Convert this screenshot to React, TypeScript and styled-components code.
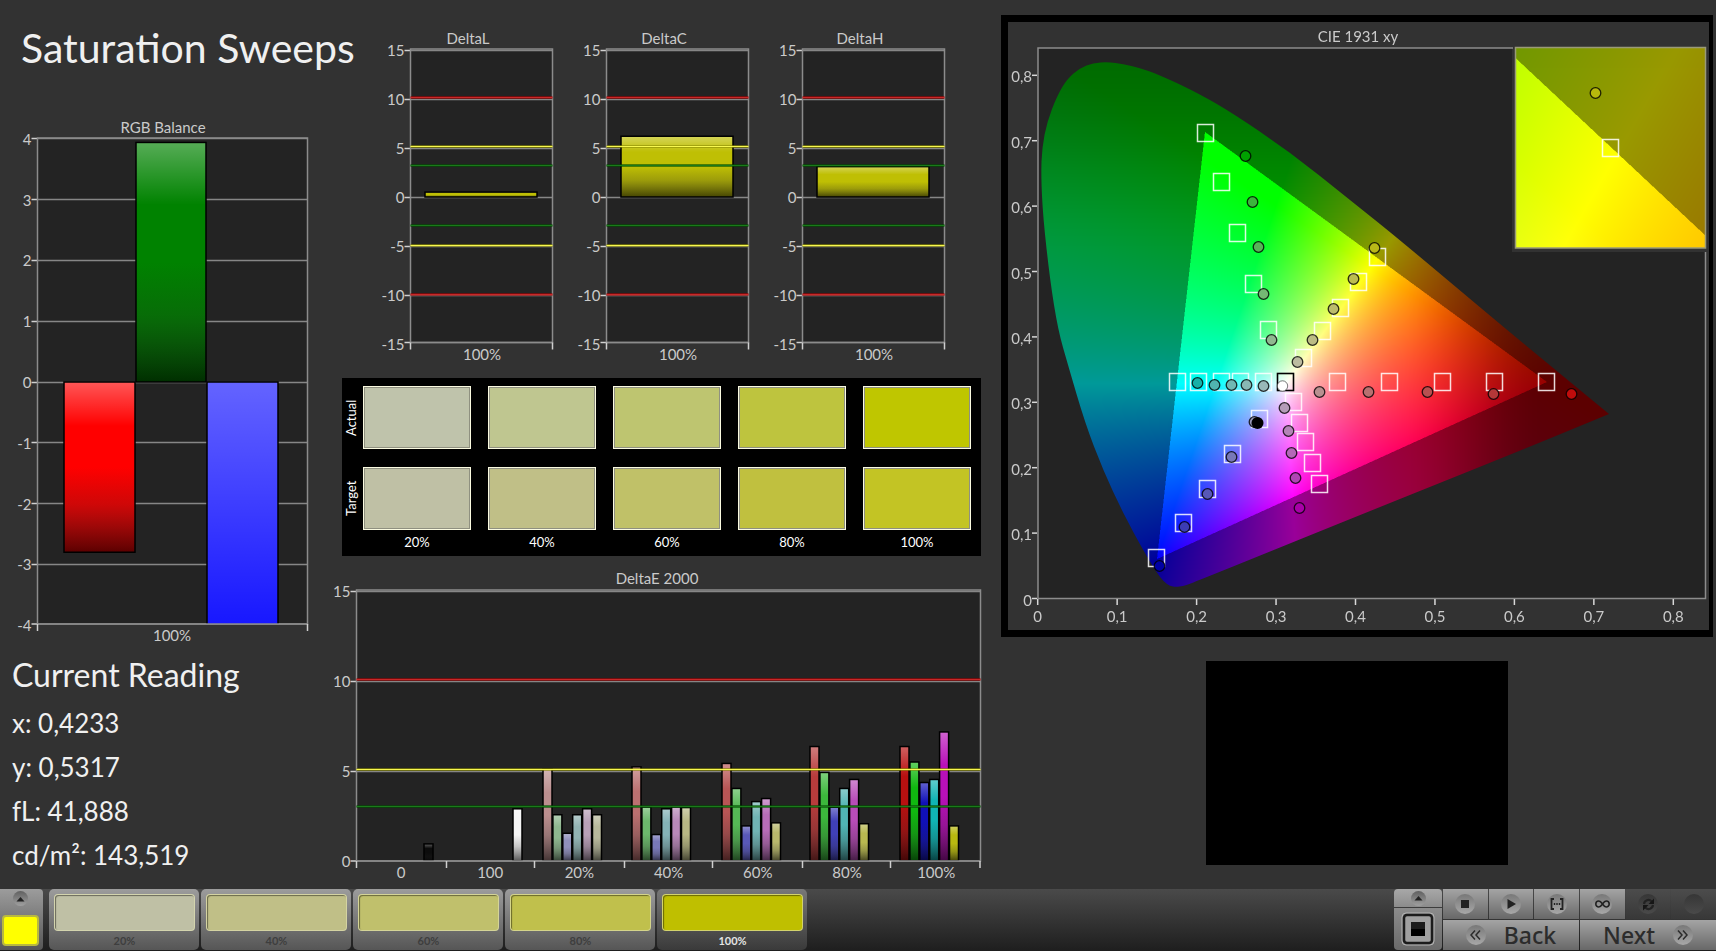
import React, { useEffect, useRef } from "react";
import styled, { createGlobalStyle } from "styled-components";

const GlobalStyle = createGlobalStyle`
  *, *::before, *::after { box-sizing: border-box; }
  body {
    margin: 0;
    background: #323232;
    color: #f0f0f0;
    font-family: Lato, "Open Sans", sans-serif;
  }
  button { font-family: inherit; }
`;

const Page = styled.div`
  display: flex;
  flex-direction: column;
  min-height: 100vh;
`;

const Dashboard = styled.main`
  flex: 1;
  display: grid;
  grid-template-columns: minmax(0, 342fr) minmax(0, 659fr) minmax(0, 715fr);
`;

const LeftColumn = styled.section`
  display: flex;
  flex-direction: column;
  padding-top: 24px;
`;

const MiddleColumn = styled.section`
  display: flex;
  flex-direction: column;
  gap: 10px;
  padding: 26px 20px 0 0;
`;

const RightColumn = styled.section`
  display: flex;
  flex-direction: column;
  gap: 24px;
  padding: 15px 3px 0 0;
`;

const PageTitle = styled.h1`
  margin: 0 0 46px 21px;
  font-size: 41px;
  line-height: 48px;
  font-weight: 400;
  white-space: nowrap;
`;

const Readings = styled.div`
  padding: 8px 0 0 12px;
`;

const ReadingsTitle = styled.h2`
  margin: 0 0 7px;
  font-size: 32px;
  line-height: 38px;
  font-weight: 400;
`;

const Reading = styled.p`
  margin: 0;
  font-size: 26px;
  line-height: 44px;
`;

const ChartSvg = styled.svg`
  display: block;
  width: 100%;
  height: auto;
  overflow: visible;
  font-size: 15px;
`;

const DeltaRow = styled.div`
  display: grid;
  grid-template-columns: repeat(3, minmax(0, 1fr));
  padding: 0 23px 0 28px;
`;

/* ---------- bar charts ---------- */

type Bar = { x: number; w: number; value: number; color: string };
type Threshold = { value: number; color: string; glow: string };
type BarChartProps = {
  id: string;
  title: string;
  titleX: number;
  titleY: number;
  width: number;
  height: number;
  left: number;
  right: number;
  top: number;
  bottom: number;
  zeroY: number;
  unit: number;
  yTicks: number[];
  xTicks: number[];
  xLabels: { x: number; text: string }[];
  bars: Bar[];
  thresholds?: Threshold[];
};

function BarChart(p: BarChartProps) {
  const y = (v: number) => p.zeroY - v * p.unit;
  const lineY = (v: number) => Math.floor(y(v)) + 0.5;
  return (
    <ChartSvg viewBox={`0 0 ${p.width} ${p.height}`} role="img" aria-label={p.title}>
      <defs>
        <linearGradient id={`${p.id}-shade`} x1="0" y1="0" x2="0" y2="1">
          <stop offset="0" stopColor="#fff" stopOpacity="0.34" />
          <stop offset="0.26" stopColor="#fff" stopOpacity="0" />
          <stop offset="0.5" stopColor="#222" stopOpacity="0" />
          <stop offset="0.72" stopColor="#222" stopOpacity="0.22" />
          <stop offset="1" stopColor="#000" stopOpacity="0.64" />
        </linearGradient>
        <clipPath id={`${p.id}-clip`}>
          <rect x={p.left} y={p.top} width={p.right - p.left} height={p.bottom - p.top} />
        </clipPath>
      </defs>
      <text x={p.titleX} y={p.titleY} textAnchor="middle" fill="#cacaca">{p.title}</text>
      <rect x={p.left} y={p.top} width={p.right - p.left} height={p.bottom - p.top} fill="#232323" />
      {p.yTicks.map((t) => {
        const ty = Math.min(lineY(t), p.bottom);
        return (
          <g key={t}>
            <line x1={p.left - 6} x2={p.left} y1={ty} y2={ty} stroke="#d0d0d0" strokeWidth="1.5" />
            <line x1={p.left} x2={p.right} y1={ty} y2={ty} stroke="#868686" strokeWidth="1.5" />
            <text x={p.left - 6} y={y(t) + 6} textAnchor="end" fill="#cacaca">{t}</text>
          </g>
        );
      })}
      <g clipPath={`url(#${p.id}-clip)`}>
        {p.bars.map((b, i) => {
          const by = Math.min(y(b.value), p.zeroY);
          const bh = Math.abs(b.value * p.unit);
          return (
            <g key={i}>
              <rect x={b.x} y={by} width={b.w} height={bh} fill={b.color} />
              <rect x={b.x} y={by} width={b.w} height={bh} fill={`url(#${p.id}-shade)`} stroke="#000" strokeWidth="1.5" />
            </g>
          );
        })}
      </g>
      <rect x={p.left} y={p.top} width={p.right - p.left} height={p.bottom - p.top} fill="none" stroke="#8c8c8c" strokeWidth="1.5" />
      {(p.thresholds || []).map((t, i) => (
        <g key={i}>
          <line x1={p.left} x2={p.right} y1={lineY(t.value)} y2={lineY(t.value)} stroke={t.glow} strokeOpacity="0.6" strokeWidth="3" />
          <line x1={p.left} x2={p.right} y1={lineY(t.value)} y2={lineY(t.value)} stroke={t.color} strokeWidth="1" />
        </g>
      ))}
      {p.xTicks.map((t) => (
        <line key={t} x1={t} x2={t} y1={p.bottom} y2={p.bottom + 7} stroke="#d0d0d0" strokeWidth="1.5" />
      ))}
      {p.xLabels.map((l) => (
        <text key={l.text} x={l.x} y={p.bottom + 17} textAnchor="middle" fill="#cacaca">{l.text}</text>
      ))}
    </ChartSvg>
  );
}

const RED = { color: "#c82828", glow: "#a00000" };
const YELLOW = { color: "#f8f850", glow: "#8c8c00" };
const GREEN = { color: "#1a7a1a", glow: "#004c00" };

const deltaThresholds: Threshold[] = [
  { value: 10.2, ...RED },
  { value: 5.2, ...YELLOW },
  { value: 3.2, ...GREEN },
  { value: -2.9, ...GREEN },
  { value: -4.9, ...YELLOW },
  { value: -9.9, ...RED },
];

function DeltaChart({ title, value }: { title: string; value: number }) {
  return (
    <BarChart
      id={title}
      title={title}
      titleX={98}
      titleY={18}
      width={196}
      height={342}
      left={40.5}
      right={182.5}
      top={23}
      bottom={316.5}
      zeroY={171}
      unit={9.8}
      yTicks={[15, 10, 5, 0, -5, -10, -15]}
      xTicks={[40.5, 182.5]}
      xLabels={[{ x: 112, text: "100%" }]}
      bars={[{ x: 55, w: 112, value, color: "#bfbf04" }]}
      thresholds={deltaThresholds}
    />
  );
}

const deltaE = [
  { start: 201, values: [5.12, 2.57, 1.54, 2.57, 2.9, 2.57], colors: ["#bb8e8e", "#8fb78f", "#9090bb", "#92b3b3", "#b8a0b8", "#b8b89c"] },
  { start: 290, values: [5.23, 3, 1.47, 2.9, 3, 2.97], colors: ["#bb7070", "#6cb86c", "#7878b8", "#84b2b6", "#b888b8", "#b8b884"] },
  { start: 380, values: [5.42, 4.03, 1.95, 3.3, 3.47, 2.12], colors: ["#b85555", "#55b855", "#5858b8", "#70b4b4", "#b86cb8", "#b8b86c"] },
  { start: 468, values: [6.36, 4.92, 2.99, 4.03, 4.53, 2.07], colors: ["#b83c3c", "#3cb83c", "#4040b8", "#50b4b4", "#b84cb8", "#b8b850"] },
  { start: 558, values: [6.36, 5.5, 4.36, 4.53, 7.17, 1.95], colors: ["#b81010", "#10b810", "#1010b8", "#10b4b4", "#b810b8", "#b8b810"] },
];

const deltaEBars: Bar[] = [
  { x: 82, w: 9, value: 0.95, color: "#0c0c0c" },
  { x: 171, w: 9, value: 2.9, color: "#f4f4f4" },
  ...deltaE.flatMap((g) =>
    g.values.map((value, i) => ({ x: g.start + i * 9.9, w: 9, value, color: g.colors[i] }))
  ),
];

/* ---------- swatch comparison ---------- */

const SwatchPanel = styled.div`
  display: flex;
  flex-direction: column;
  gap: 18px;
  background: #000;
  padding: 8px 10px 5px 0;
  height: 178px;
`;

const SwatchRow = styled.div`
  display: flex;
`;

const SwatchSide = styled.div`
  width: 21px;
  display: flex;
  align-items: center;
  justify-content: flex-end;
  padding-left: 4px;
  font-size: 13px;
  line-height: 16px;
  color: #fff;
  writing-mode: vertical-rl;
  transform: rotate(180deg);
`;

const SideText = styled.span`
  flex: 1;
  text-align: center;
`;

const SwatchCells = styled.div`
  flex: 1;
  display: grid;
  grid-template-columns: repeat(5, minmax(0, 1fr));
  column-gap: 17px;
`;

const Swatch = styled.div<{ $color: string }>`
  height: 63px;
  border: 1px solid #fafae0;
  background: ${(p) => p.$color};
  box-shadow: inset 0 0 0 1px #8f9080;
`;

const SwatchFoot = styled(SwatchRow)`
  margin-top: -14px;
  font-size: 13px;
  line-height: 16px;
  text-align: center;
  color: #fff;
`;

const levels = ["20%", "40%", "60%", "80%", "100%"];
const actual = ["#bfc3ab", "#bfc690", "#bec570", "#bec43e", "#bfc600"];
const target = ["#bfc0a5", "#c0bf87", "#c0c168", "#c0c03f", "#c3c424"];

/* ---------- CIE diagram ---------- */

const CiePanel = styled.figure`
  margin: 0;
  border: 7px solid #000;
  border-right-width: 4px;
  display: grid;
  & > * { grid-area: 1 / 1; }
`;

const CieCanvas = styled.canvas`
  display: block;
  width: 100%;
  height: auto;
`;

const CIE = { x: 1008, y: 22, w: 701, h: 608 };
const px = (x: number) => 1037.7 + 794.5 * x;
const py = (y: number) => 598.5 - 654 * y;

const LOCUS: [number, number][] = [
  [1093, 63], [1108, 62], [1123, 64], [1140, 68], [1157, 74], [1190, 89], [1228, 110], [1290, 152],
  [1350, 200], [1400, 240], [1507, 330], [1609, 414], [1517, 452], [1360, 515],
  [1190, 584], [1183, 586], [1176, 587], [1170, 586], [1164, 582], [1157, 573], [1143, 550],
  [1123, 513], [1103, 470], [1085, 423], [1068, 365], [1058, 330], [1050, 280],
  [1043, 217], [1041, 175], [1042, 148], [1047, 122], [1057, 96], [1067, 79], [1080, 68],
];
const GAMUT: [number, number][] = [[1205, 132], [1547, 382], [1157, 559]];

function inTriangle(x: number, y: number) {
  let inside = true;
  for (let i = 0; i < 3; i++) {
    const [ax, ay] = GAMUT[i];
    const [bx, by] = GAMUT[(i + 1) % 3];
    if ((bx - ax) * (y - ay) - (by - ay) * (x - ax) < 0) inside = false;
  }
  return inside;
}

function smooth(t: number) {
  const c = Math.max(0, Math.min(1, t));
  return c * c * (3 - 2 * c);
}

/* Chromaticity to display colour, scaled so the strongest channel is full. */
function colorAt(x: number, y: number): [number, number, number] {
  const z = 1 - x - y;
  const rgb = [
    3.2406 * x - 1.5372 * y - 0.4986 * z,
    -0.9689 * x + 1.8758 * y + 0.0415 * z,
    0.0557 * x - 0.204 * y + 1.057 * z,
  ].map((c) => Math.max(0, c));
  const max = Math.max(...rgb);
  const inside = inTriangle(px(x), py(y));
  let level = inside ? 1 : 0.6;
  level *= 1 - 0.4 * smooth((x - 0.46) / 0.18);
  if (!inside) level *= 1 - 0.3 * smooth((y - 0.52) / 0.32);
  return rgb.map((c) => 255 * level * Math.pow(c / max, 0.85)) as [number, number, number];
}

/* Paints the colour field, averaging four samples per pixel. */
function fillField(
  ctx: CanvasRenderingContext2D,
  w: number,
  h: number,
  toXy: (i: number, j: number) => [number, number],
  dx: number,
  dy: number
) {
  const layer = document.createElement("canvas");
  layer.width = w;
  layer.height = h;
  const lc = layer.getContext("2d")!;
  const img = lc.createImageData(w, h);
  for (let j = 0; j < h; j++) {
    for (let i = 0; i < w; i++) {
      const sum = [0, 0, 0];
      for (let s = 0; s < 4; s++) {
        const [x, y] = toXy(i + 0.25 + (s % 2) / 2, j + 0.25 + (s >> 1) / 2);
        const c = colorAt(x, y);
        sum[0] += c[0];
        sum[1] += c[1];
        sum[2] += c[2];
      }
      const k = (j * w + i) * 4;
      img.data[k] = sum[0] / 4;
      img.data[k + 1] = sum[1] / 4;
      img.data[k + 2] = sum[2] / 4;
      img.data[k + 3] = 255;
    }
  }
  lc.putImageData(img, 0, 0);
  ctx.drawImage(layer, dx, dy);
}

function paintCie(canvas: HTMLCanvasElement) {
  const ctx = canvas.getContext("2d");
  if (!ctx) return;
  ctx.clearRect(0, 0, CIE.w, CIE.h);
  ctx.fillStyle = "#232323";
  ctx.fillRect(30, 26, 668, 550);
  ctx.save();
  ctx.translate(-CIE.x, -CIE.y);
  ctx.beginPath();
  const n = LOCUS.length;
  const mid = (a: [number, number], b: [number, number]) => [(a[0] + b[0]) / 2, (a[1] + b[1]) / 2];
  const first = mid(LOCUS[n - 1], LOCUS[0]);
  ctx.moveTo(first[0], first[1]);
  LOCUS.forEach((pt, i) => {
    const m = mid(pt, LOCUS[(i + 1) % n]);
    if (pt[0] === 1609) {
      ctx.lineTo(pt[0], pt[1]);
      ctx.lineTo(m[0], m[1]);
    } else {
      ctx.quadraticCurveTo(pt[0], pt[1], m[0], m[1]);
    }
  });
  ctx.closePath();
  ctx.clip();
  ctx.translate(CIE.x, CIE.y);
  fillField(ctx, 620, 580, (i, j) => [(i + CIE.x - 1037.7) / 794.5, (598.5 - j - CIE.y) / 654], 0, 0);
  ctx.restore();

  /* magnified view around the selected target */
  ctx.fillStyle = "#323232";
  ctx.fillRect(504, 24, 197, 206);
  const span = 0.046;
  fillField(ctx, 190, 200, (i, j) => [0.4267 + (i / 190 - 0.5) * span, 0.5212 - (j / 200 - 0.5) * span], 508, 26);
}

const SQUARES: [number, number][] = [
  [1205, 133], [1221, 182], [1237, 233], [1253, 284], [1268, 330],
  [1377, 257], [1358, 282], [1340, 308], [1322, 331], [1303, 358],
  [1177, 382], [1198, 382], [1221, 382], [1240, 382], [1263, 382],
  [1337, 382], [1389, 382], [1442, 382], [1494, 382], [1546, 382],
  [1293, 402], [1299, 423], [1305, 442], [1312, 463], [1319, 484],
  [1259, 419], [1232, 454], [1207, 489], [1183, 523], [1156, 558],
  [1610, 148],
];

const CIRCLES: [number, number, string][] = [
  [1245, 156, "#00a000"], [1252, 202, "#3cb43c"], [1258, 247, "#58b458"], [1263, 294, "#74b874"], [1271, 340, "#90b890"],
  [1374, 248, "#b8b818"], [1353, 279, "#bcbc50"], [1333, 309, "#bcbc6c"], [1312, 340, "#bcbc84"], [1297, 362, "#bcbca0"],
  [1197, 383, "#18b0a8"], [1214, 385, "#50b4b0"], [1231, 385, "#70b8b4"], [1246, 385, "#88b8b4"], [1263, 386, "#98b8b8"],
  [1319, 392, "#b89090"], [1368, 392, "#b87070"], [1427, 392, "#b85050"], [1493, 394, "#b43838"], [1571, 394, "#c00c0c"],
  [1284, 408, "#b49cb8"], [1288, 431, "#b484b8"], [1291, 453, "#b468b8"], [1295, 478, "#b044b4"], [1299, 508, "#a800a8"],
  [1254, 422, "#9898b8"], [1231, 457, "#7878b8"], [1207, 494, "#5858b8"], [1184, 527, "#3c3cb4"], [1159, 566, "#0000a4"],
  [1595, 93, "#b8b80c"],
];

function CieDiagram() {
  const ref = useRef<HTMLCanvasElement>(null);
  useEffect(() => {
    if (ref.current) paintCie(ref.current);
  }, []);
  const xs = ["0", "0,1", "0,2", "0,3", "0,4", "0,5", "0,6", "0,7", "0,8"];
  return (
    <CiePanel>
      <CieCanvas ref={ref} width={CIE.w} height={CIE.h} />
      <ChartSvg viewBox={`${CIE.x} ${CIE.y} ${CIE.w} ${CIE.h}`} role="img" aria-label="CIE 1931 xy chromaticity">
        <text x="1358" y="42" textAnchor="middle" fill="#cacaca">CIE 1931 xy</text>
        <path d="M1513 48H1038V598.500H1705.500V252" fill="none" stroke="#8c8c8c" strokeWidth="1.500" />
        <rect x="1515.500" y="47.500" width="190" height="200.500" fill="none" stroke="#9a9a78" strokeWidth="1.500" />
        {xs.map((label, i) => (
          <g key={label}>
            <line x1={px(i / 10)} x2={px(i / 10)} y1="599" y2="605" stroke="#d8d8d8" strokeWidth="1.500" />
            <text x={px(i / 10)} y="622" textAnchor="middle" fill="#cacaca">{label}</text>
            <line x1="1032" x2="1037" y1={py(i / 10)} y2={py(i / 10)} stroke="#d8d8d8" strokeWidth="1.500" />
            <text x="1032" y={py(i / 10) + 7} textAnchor="end" fill="#cacaca">{label}</text>
          </g>
        ))}
        {SQUARES.map(([x, y]) => (
          <rect key={`${x}-${y}`} x={x - 7.5} y={y - 8.5} width="16" height="17" fill="none" stroke="#fff" strokeOpacity="0.85" strokeWidth="1.500" />
        ))}
        <rect x="1277.500" y="373.500" width="16" height="17" fill="none" stroke="#000" strokeWidth="1.600" />
        {CIRCLES.map(([x, y, c]) => (
          <circle key={`${x}-${y}`} cx={x + 0.5} cy={y} r="5.300" fill={c} stroke="#000" strokeOpacity="0.8" strokeWidth="1.300" />
        ))}
        <circle cx="1282.500" cy="386" r="5.200" fill="#fff" stroke="#222" strokeOpacity="0.6" strokeWidth="1" />
        <circle cx="1257.500" cy="423" r="6" fill="#000" />
      </ChartSvg>
    </CiePanel>
  );
}

const VideoWindow = styled.div`
  align-self: center;
  width: 302px;
  height: 204px;
  background: #000;
`;

/* ---------- bottom bar ---------- */

const BottomBar = styled.footer`
  display: flex;
  justify-content: space-between;
  height: 62px;
  padding-bottom: 1px;
  background: linear-gradient(#4a4a4a, #1e1e1e);
`;

const PatternStrip = styled.div`
  display: flex;
  gap: 2px;
`;

const PatternMenu = styled.button`
  width: 43px;
  margin: 0 4px 0 0;
  padding: 2px 4px 4px 2px;
  border: 0;
  border-radius: 0 4px 4px 0;
  display: flex;
  flex-direction: column;
  align-items: center;
  justify-content: space-between;
  background: linear-gradient(#9c9c9c, #565656);
`;

const CurrentColor = styled.span`
  width: 37px;
  height: 31px;
  border: 2px solid #b8b840;
  border-radius: 4px;
  background: #ff0;
`;

const PatternCard = styled.button<{ $active?: boolean }>`
  width: 150px;
  padding: 5px 4px 0 5px;
  border: 0;
  border-radius: 5px;
  display: flex;
  flex-direction: column;
  align-items: stretch;
  gap: 3px;
  font-size: 11px;
  line-height: 14px;
  font-weight: 700;
  color: ${(p) => (p.$active ? "#e4e4e4" : "#3e3e3e")};
  background: ${(p) => (p.$active ? "linear-gradient(#787878, #3a3a3a)" : "linear-gradient(#9c9c9c, #565656)")};
`;

const PatternColor = styled.span<{ $color: string }>`
  height: 37px;
  border: 1px solid rgba(225, 225, 180, 0.6);
  border-radius: 4px;
  background: ${(p) => p.$color};
  box-shadow: inset 1px 1px 1px rgba(0, 0, 0, 0.45);
`;

const Controls = styled.div`
  display: flex;
  gap: 1px;
`;

const SideStack = styled.div`
  width: 48px;
  display: flex;
  flex-direction: column;
  gap: 1px;
`;

const ControlButton = styled.button<{ $dim?: boolean }>`
  flex: 1;
  border: 0;
  padding: 0;
  display: flex;
  align-items: center;
  justify-content: center;
  color: #222;
  background: ${(p) => (p.$dim ? "linear-gradient(#4c4c4c, #383838)" : "linear-gradient(#a4a4a4, #686868)")};
`;

const MenuTop = styled(ControlButton)`
  flex: none;
  height: 18px;
  border-radius: 4px 4px 0 0;
  background: linear-gradient(#a8a8a8, #8c8c8c);
`;

const WindowToggle = styled(ControlButton)`
  border-radius: 0 0 4px 4px;
  background: linear-gradient(#8c8c8c, #6a6a6a);
`;

const Transport = styled.div`
  width: 273px;
  display: grid;
  grid-template-rows: 30px 30px;
  gap: 1px;
`;

const ButtonRow = styled.div`
  display: flex;
  gap: 1px;
`;

const NavButton = styled(ControlButton)`
  gap: 18px;
  font-family: "Noto Sans", "Open Sans", sans-serif;
  font-size: 23px;
  line-height: 30px;
  font-weight: 500;
  color: #2c2c2c;
`;

const Knob = styled.span<{ $dim?: boolean; $small?: boolean }>`
  width: ${(p) => (p.$small ? 15 : 20)}px;
  height: ${(p) => (p.$small ? 15 : 20)}px;
  border-radius: 50%;
  display: flex;
  align-items: center;
  justify-content: center;
  background: ${(p) =>
    p.$dim ? "linear-gradient(#363636, #4a4a4a)" : p.$small ? "linear-gradient(#606060, #a0a0a0)" : "linear-gradient(#787878, #a8a8a8)"};
`;

const Glyph = styled.svg`
  display: block;
  fill: none;
  stroke: currentColor;
`;

function UpArrow() {
  return (
    <Knob $small>
      <Glyph width="9" height="6" viewBox="0 0 9 6"><path d="M0.500 5.500L4.500 1l4 4.500z" fill="#222" stroke="none" /></Glyph>
    </Knob>
  );
}

export default function App() {
  return (
    <Page>
      <GlobalStyle />
      <Dashboard>
        <LeftColumn>
          <PageTitle>Saturation Sweeps</PageTitle>
          <BarChart
            id="rgb"
            title="RGB Balance"
            titleX={163}
            titleY={15}
            width={342}
            height={530}
            left={37.5}
            right={307.5}
            top={20}
            bottom={506}
            zeroY={264}
            unit={60.8}
            yTicks={[4, 3, 2, 1, 0, -1, -2, -3, -4]}
            xTicks={[37.5, 307.5]}
            xLabels={[{ x: 172, text: "100%" }]}
            bars={[
              { x: 64, w: 71, value: -2.8, color: "#ff0000" },
              { x: 136, w: 70, value: 3.94, color: "#008200" },
              { x: 207, w: 71, value: -16, color: "#1414ff" },
            ]}
          />
          <Readings>
            <ReadingsTitle>Current Reading</ReadingsTitle>
            <Reading>x: 0,4233</Reading>
            <Reading>y: 0,5317</Reading>
            <Reading>fL: 41,888</Reading>
            <Reading>cd/m²: 143,519</Reading>
          </Readings>
        </LeftColumn>

        <MiddleColumn>
          <DeltaRow>
            <DeltaChart title="DeltaL" value={0.5} />
            <DeltaChart title="DeltaC" value={6.2} />
            <DeltaChart title="DeltaH" value={3.1} />
          </DeltaRow>
          <SwatchPanel>
            <SwatchRow>
              <SwatchSide><SideText>Actual</SideText></SwatchSide>
              <SwatchCells>{actual.map((c) => <Swatch key={c} $color={c} />)}</SwatchCells>
            </SwatchRow>
            <SwatchRow>
              <SwatchSide><SideText>Target</SideText></SwatchSide>
              <SwatchCells>{target.map((c) => <Swatch key={c} $color={c} />)}</SwatchCells>
            </SwatchRow>
            <SwatchFoot>
              <SwatchSide />
              <SwatchCells>{levels.map((l) => <span key={l}>{l}</span>)}</SwatchCells>
            </SwatchFoot>
          </SwatchPanel>
          <BarChart
            id="deltaE"
            title="DeltaE 2000"
            titleX={315}
            titleY={18}
            width={639}
            height={316}
            left={14.5}
            right={638.5}
            top={24}
            bottom={295}
            zeroY={295}
            unit={18}
            yTicks={[15, 10, 5, 0]}
            xTicks={[14.5, 104.5, 192.5, 282.5, 370.5, 460.5, 548.5, 638]}
            xLabels={["0", "100", ...levels].map((text, i) => ({ x: 59 + i * 89.2, text }))}
            bars={deltaEBars}
            thresholds={[
              { value: 10.1, ...RED },
              { value: 5.1, ...YELLOW },
              { value: 3.05, ...GREEN },
            ]}
          />
        </MiddleColumn>

        <RightColumn>
          <CieDiagram />
          <VideoWindow />
        </RightColumn>
      </Dashboard>

      <BottomBar>
        <PatternStrip>
          <PatternMenu aria-label="Choose pattern">
            <UpArrow />
            <CurrentColor />
          </PatternMenu>
          {levels.map((l, i) => (
            <PatternCard key={l} $active={i === 4}>
              <PatternColor $color={["#bfc0a5", "#c0bf87", "#c0c06c", "#c0c04c", "#bfbf00"][i]} />
              {l}
            </PatternCard>
          ))}
        </PatternStrip>
        <Controls>
          <SideStack>
            <MenuTop aria-label="Open menu"><UpArrow /></MenuTop>
            <WindowToggle aria-label="Pattern window">
              <Glyph width="34" height="34" viewBox="0 0 34 34">
                <rect x="1" y="1" width="32" height="32" rx="4" fill="#7c7c7c" stroke="#b4b4b4" />
                <rect x="3" y="3" width="28" height="28" rx="3" fill="#a0a0a0" stroke="#1c1c1c" strokeWidth="2.500" />
                <rect x="10" y="10" width="14" height="14" fill="#000" stroke="none" />
                <rect x="10" y="10" width="14" height="7" fill="#1c1c1c" stroke="none" />
              </Glyph>
            </WindowToggle>
          </SideStack>
          <Transport>
            <ButtonRow>
              <ControlButton aria-label="Stop">
                <Knob><Glyph width="8" height="8" viewBox="0 0 8 8"><rect width="8" height="8" fill="#222" stroke="none" /></Glyph></Knob>
              </ControlButton>
              <ControlButton aria-label="Play">
                <Knob><Glyph width="10" height="10" viewBox="0 0 10 10"><path d="M1.500 0L10 5l-8.500 5z" fill="#222" stroke="none" /></Glyph></Knob>
              </ControlButton>
              <ControlButton aria-label="Read range">
                <Knob>
                  <Glyph width="14" height="12" viewBox="0 0 14 12" strokeWidth="1.800">
                    <path d="M4 1H1.500v10H4M10 1h2.500v10H10" />
                    <path d="M3.800 6h1.400M6.300 6h1.400M8.800 6h1.400" />
                  </Glyph>
                </Knob>
              </ControlButton>
              <ControlButton aria-label="Read continuously">
                <Knob>
                  <Glyph width="15" height="8" viewBox="0 0 15 8" strokeWidth="1.600">
                    <path d="M7.500 4C6 1.800 5 1 3.800 1a3 3 0 0 0 0 6C5 7 6 6.200 7.500 4S10 1 11.200 1a3 3 0 0 1 0 6C10 7 9 6.200 7.500 4z" />
                  </Glyph>
                </Knob>
              </ControlButton>
              <ControlButton $dim aria-label="Refresh" disabled>
                <Knob $dim>
                  <Glyph width="13" height="13" viewBox="0 0 13 13" stroke="#161616" strokeWidth="2.200">
                    <path d="M2 6a4.500 4.500 0 0 1 7.500-2.800M11 7a4.500 4.500 0 0 1-7.500 2.800" />
                    <path d="M12 0.500v5.500H6.500zM1 12.500V7h5.500z" fill="#161616" stroke="none" />
                  </Glyph>
                </Knob>
              </ControlButton>
              <ControlButton $dim aria-label="No action" disabled><Knob $dim /></ControlButton>
            </ButtonRow>
            <ButtonRow>
              <NavButton>
                <Knob><Glyph width="11" height="10" viewBox="0 0 11 10" strokeWidth="1.500"><path d="M5 0.500L1 5l4 4.500M10 0.500L6 5l4 4.500" /></Glyph></Knob>
                Back
              </NavButton>
              <NavButton>
                Next
                <Knob><Glyph width="11" height="10" viewBox="0 0 11 10" strokeWidth="1.500"><path d="M1 0.500L5 5 1 9.500M6 0.500L10 5 6 9.500" /></Glyph></Knob>
              </NavButton>
            </ButtonRow>
          </Transport>
        </Controls>
      </BottomBar>
    </Page>
  );
}
